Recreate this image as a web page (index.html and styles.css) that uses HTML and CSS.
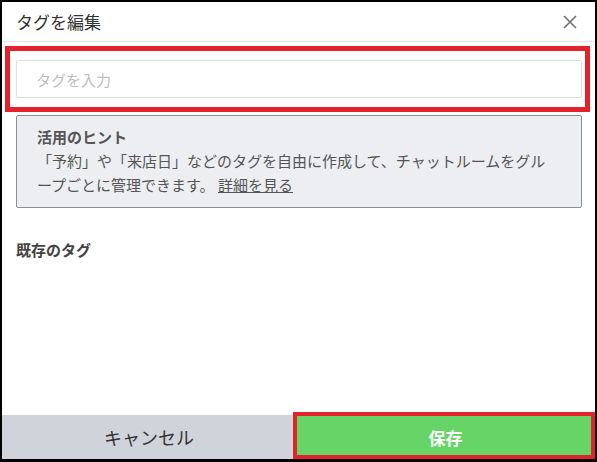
FILE: index.html
```html
<!DOCTYPE html>
<html lang="ja">
<head>
<meta charset="utf-8">
<title>タグを編集</title>
<link rel="stylesheet" href="styles.css">
</head>
<body>
<div class="frame">
  <div class="dialog">
    <header class="head">
      <h1 class="title">タグを編集</h1>
      <button class="close" aria-label="閉じる">
        <svg width="14" height="14" viewBox="0 0 14 14"><path d="M1 1 L13 13 M13 1 L1 13" stroke="#707070" stroke-width="1.6" fill="none"/></svg>
      </button>
    </header>
    <div class="body">
      <input class="tag-input" type="text" placeholder="タグを入力">
      <div class="hint">
        <p class="hint-title">活用のヒント</p>
        <p class="hint-text">「予約」や「来店日」などのタグを自由に作成して、チャットルームをグループごとに管理できます。 <a class="hint-link" href="#">詳細を見る</a></p>
      </div>
      <h2 class="section">既存のタグ</h2>
    </div>
    <footer class="foot">
      <button class="btn btn-cancel">キャンセル</button>
      <button class="btn btn-save">保存</button>
    </footer>
  </div>
  <div class="mark mark-input"></div>
  <div class="mark mark-save"></div>
</div>
</body>
</html>
```
FILE: styles.css
```css
* { box-sizing: border-box; }
html, body { margin: 0; padding: 0; background: #000; }
body {
  font-family: "Noto Sans CJK JP", "Noto Sans", sans-serif;
  color: #333;
  text-spacing-trim: space-all;
}
.frame {
  position: relative;
  width: 597px;
  height: 462px;
  border-style: solid;
  border-color: #000;
  border-width: 2px 2px 3px 2px;
  background: #fff;
}
.dialog {
  display: flex;
  flex-direction: column;
  height: 100%;
}
.head {
  display: flex;
  align-items: center;
  justify-content: space-between;
  height: 40px;
  padding: 0 14px 0 14px;
  border-bottom: 1px solid #e6e6e6;
}
.title {
  margin: 0;
  font-size: 17px;
  font-weight: normal;
  line-height: 24px;
  color: #333;
}
.close {
  display: flex;
  align-items: center;
  justify-content: center;
  width: 20px;
  height: 20px;
  padding: 0;
  margin-right: 1px;
  border: 0;
  background: transparent;
}
.body {
  flex: 1;
  padding: 18px 13px 0 14px;
}
.tag-input {
  display: block;
  width: 100%;
  height: 38px;
  margin: 0;
  padding: 0 19px;
  border: 1px solid #dedede;
  border-radius: 2px;
  font-family: inherit;
  font-size: 15px;
  color: #333;
  outline: none;
}
.tag-input::placeholder { color: #bdbdbd; }
.hint {
  margin-top: 17px;
  padding: 9px 22px 10px 20px;
  height: 93px;
  background: #eceef1;
  border: 1px solid #8a8f9c;
  border-radius: 2px;
  font-size: 15px;
  line-height: 24px;
  color: #555;
}
.hint p { margin: 0; }
.hint-title { font-weight: bold; color: #555; }
.hint-text { line-break: normal; }
.hint-link { color: #555; text-decoration: underline; }
.section {
  margin: 32px 0 0;
  font-size: 15px;
  font-weight: bold;
  line-height: 20px;
  color: #444;
}
.foot {
  display: grid;
  grid-template-columns: 294px 1fr;
  height: 44px;
}
.btn {
  border: 0;
  margin: 0;
  font-family: inherit;
  font-size: 18px;
}
.btn-cancel { background: #d0d4da; color: #333; }
.btn-save { background: #66d466; color: #fff; font-weight: bold; font-size: 17px; }
.mark {
  position: absolute;
  border: 5px solid #e3232b;
}
.mark-input {
  left: 3px;
  top: 44px;
  width: 585px;
  height: 66px;
}
.mark-save {
  left: 291px;
  top: 410px;
  width: 302px;
  height: 47px;
  border-width: 4px;
}
```
